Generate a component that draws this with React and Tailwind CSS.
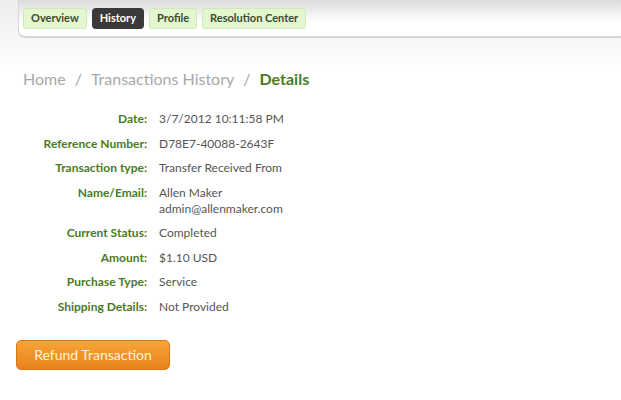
import React from 'react';

const rows = [
  ['Date:', ['3/7/2012 10:11:58 PM']],
  ['Reference Number:', ['D78E7-40088-2643F']],
  ['Transaction type:', ['Transfer Received From']],
  ['Name/Email:', ['Allen Maker', 'admin@allenmaker.com']],
  ['Current Status:', ['Completed']],
  ['Amount:', ['$1.10 USD']],
  ['Purchase Type:', ['Service']],
  ['Shipping Details:', ['Not Provided']],
];

function Tab({ label, active }) {
  return (
    <div
      className={
        active
          ? 'h-[21px] px-[8px] flex items-center rounded-[4px] bg-[#3a3a3a] text-white font-bold text-[11px]'
          : 'h-[21px] px-[7px] flex items-center rounded-[3px] bg-[#e3f7d0] border border-[#cfeab8] text-[#3d4a2e] font-bold text-[11px]'
      }
    >
      {label}
    </div>
  );
}

export default function App() {
  return (
    <div className="w-[621px] h-[400px] overflow-hidden bg-white font-['Lato',sans-serif] bg-gradient-to-b from-[#ececec] to-white to-[70px]">
      <div className="ml-[18px] h-[38px] bg-gradient-to-b from-[#dcdcdc] to-white to-[60%] border-b-2 border-l border-[#d6d6d6] rounded-bl-[7px] flex items-start gap-[5px] pl-[4px] pt-[8px]">
        <Tab label="Overview" />
        <Tab label="History" active />
        <Tab label="Profile" />
        <Tab label="Resolution Center" />
      </div>

      <div className="mt-[29px] ml-[23px] flex items-center gap-[9px] text-[16px] text-[#a8a8a8]">
        <span>Home</span>
        <span>/</span>
        <span>Transactions History</span>
        <span>/</span>
        <span className="text-[#4b7a1f] font-bold">Details</span>
      </div>

      <div className="mt-[20px] grid grid-cols-[147px_1fr] gap-x-[12px] gap-y-[8.5px] text-[12px] leading-[16px]">
        {rows.map(([label, vals]) => (
          <React.Fragment key={label}>
            <div className="text-right font-bold text-[#4b7a1f]">{label}</div>
            <div className="text-[#555]">
              {vals.map((v) => (
                <div key={v}>{v}</div>
              ))}
            </div>
          </React.Fragment>
        ))}
      </div>

      <button className="mt-[25px] ml-[16px] w-[154px] h-[30px] rounded-[5px] border border-[#d9771a] bg-gradient-to-b from-[#f8a537] to-[#e8801c] text-[#fff3de] text-[14px]">
        Refund Transaction
      </button>
    </div>
  );
}
